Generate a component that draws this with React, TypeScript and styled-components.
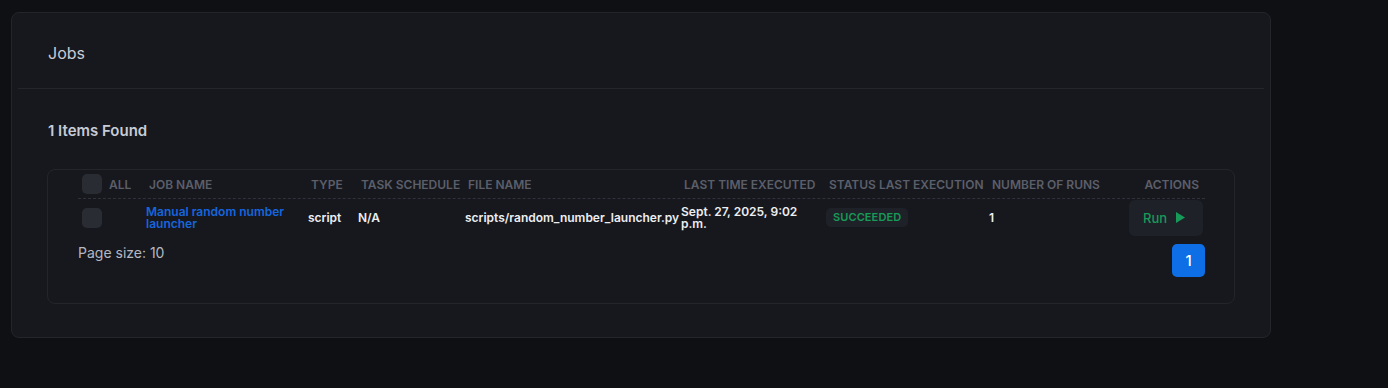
import React from "react";
import styled, { createGlobalStyle } from "styled-components";

const GlobalStyle = createGlobalStyle`
  html, body { margin: 0; padding: 0; background: #0f1014; }
  body { font-family: Inter, "Noto Sans", sans-serif; -webkit-font-smoothing: antialiased; }
  * { box-sizing: border-box; }
`;

const Page = styled.div`
  padding: 12px 0 0 11px;
  width: 1388px;
  height: 388px;
`;

const Card = styled.section`
  width: 1260px;
  height: 326px;
  background: #17181d;
  border: 1px solid #23252b;
  border-radius: 8px;
  padding: 6px;
  display: flex;
  flex-direction: column;
`;

const CardHeader = styled.header`
  height: 70px;
  display: flex;
  align-items: center;
  padding-left: 30px;
  padding-bottom: 2px;
  border-bottom: 1px solid #24262c;
`;

const Title = styled.h2`
  margin: 0;
  font-size: 16px;
  font-weight: 400;
  color: #c6cbd5;
`;

const CardBody = styled.div`
  padding: 23px 29px 0 29px;
  display: flex;
  flex-direction: column;
`;

const Count = styled.div`
  font-size: 15px;
  font-weight: 600;
  color: #c6cbd5;
  line-height: 38px;
  margin-bottom: 19px;
  padding-left: 1px;
`;

const TableBox = styled.div`
  border: 1px solid #23252b;
  border-radius: 8px;
  padding: 0 29px 26px 30px;
`;

const cols = "64px 162px 50px 107px 216px 145px 163px 140px 79px";

const HeadRow = styled.div`
  display: grid;
  grid-template-columns: ${cols};
  height: 29px;
  align-items: center;
  border-bottom: 1px dashed #2f323a;
`;

const HeadCell = styled.div<{ $right?: boolean }>`
  font-size: 12px;
  font-weight: 600;
  color: #5b5f6a;
  text-transform: uppercase;
  white-space: nowrap;
  padding-left: 7px;
  padding-right: ${(p) => (p.$right ? "5px" : "0")};
  display: flex;
  align-items: center;
  justify-content: ${(p) => (p.$right ? "flex-end" : "flex-start")};
`;

const HeadCheckCell = styled.div`
  display: flex;
  align-items: center;
  gap: 7px;
  padding-left: 4px;
  font-size: 12px;
  font-weight: 600;
  color: #5b5f6a;
`;

const Checkbox = styled.span`
  width: 20px;
  height: 20px;
  border-radius: 5px;
  background: #2a2c33;
  display: inline-block;
  flex: none;
`;

const BodyRow = styled.div`
  display: grid;
  grid-template-columns: ${cols};
  height: 37px;
  align-items: center;
`;

const CheckCell = styled.div`
  padding-left: 4px;
  display: flex;
  align-items: center;
`;

const Cell = styled.div<{ $tone?: "link" | "text" }>`
  padding-left: 4px;
  font-size: 12px;
  font-weight: 600;
  line-height: 12px;
  color: ${(p) => (p.$tone === "link" ? "#1566dd" : "#eceef2")};
  white-space: nowrap;
`;

const WrapCell = styled(Cell)`
  white-space: normal;
`;

const Badge = styled.span`
  display: inline-block;
  padding: 4px 7px;
  border-radius: 5px;
  background: #1f2128;
  color: #179a58;
  font-size: 11px;
  font-weight: 600;
  line-height: 11px;
  letter-spacing: 0.1px;
`;

const ActionCell = styled.div`
  display: flex;
  justify-content: flex-end;
  padding-right: 1px;
`;

const RunButton = styled.button`
  width: 74px;
  height: 36px;
  border: none;
  border-radius: 6px;
  background: #1f2129;
  color: #179a58;
  font-family: inherit;
  font-size: 13px;
  font-weight: 500;
  display: flex;
  align-items: center;
  padding-left: 14px;
  gap: 9px;
  cursor: pointer;
`;

const Footer = styled.div`
  display: flex;
  justify-content: space-between;
  align-items: flex-start;
  padding-top: 8px;
`;

const PageSize = styled.div`
  font-size: 14px;
  color: #b4b8c2;
  line-height: 20px;
  margin-top: -1px;
`;

const PageButton = styled.button`
  width: 33px;
  height: 33px;
  border: none;
  border-radius: 5px;
  background: #0d6ee6;
  color: #ffffff;
  font-family: inherit;
  font-size: 15px;
  font-weight: 500;
  cursor: pointer;
`;

const headers = [
  "Job Name",
  "Type",
  "Task Schedule",
  "File Name",
  "Last Time Executed",
  "Status Last Execution",
  "Number of Runs",
];

export default function App() {
  return (
    <>
      <GlobalStyle />
      <Page>
        <Card>
          <CardHeader>
            <Title>Jobs</Title>
          </CardHeader>
          <CardBody>
            <Count>1 Items Found</Count>
            <TableBox>
              <HeadRow>
                <HeadCheckCell>
                  <Checkbox />
                  ALL
                </HeadCheckCell>
                {headers.map((h) => (
                  <HeadCell key={h}>{h}</HeadCell>
                ))}
                <HeadCell $right>Actions</HeadCell>
              </HeadRow>
              <BodyRow>
                <CheckCell>
                  <Checkbox />
                </CheckCell>
                <WrapCell $tone="link">
                  Manual random number
                  <br />
                  launcher
                </WrapCell>
                <Cell>script</Cell>
                <Cell>N/A</Cell>
                <Cell>scripts/random_number_launcher.py</Cell>
                <WrapCell>
                  Sept. 27, 2025, 9:02
                  <br />
                  p.m.
                </WrapCell>
                <Cell>
                  <Badge>SUCCEEDED</Badge>
                </Cell>
                <Cell>1</Cell>
                <ActionCell>
                  <RunButton>
                    Run
                    <svg width="9" height="11" viewBox="0 0 9 11">
                      <path d="M0 0 L9 5.5 L0 11 Z" fill="#179a58" />
                    </svg>
                  </RunButton>
                </ActionCell>
              </BodyRow>
              <Footer>
                <PageSize>Page size: 10</PageSize>
                <PageButton>1</PageButton>
              </Footer>
            </TableBox>
          </CardBody>
        </Card>
      </Page>
    </>
  );
}
